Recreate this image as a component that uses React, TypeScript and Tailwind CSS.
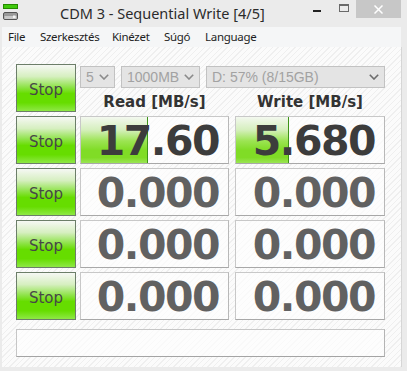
import React from "react";

const hatch =
  "bg-[repeating-linear-gradient(135deg,#fbfbfb_0px,#fbfbfb_3px,#efefef_3px,#efefef_4px)]";

function Chevron({ color }: { color: string }) {
  return (
    <svg width="10" height="6" viewBox="0 0 10 6" className="shrink-0">
      <path d="M0.8 0.8 L5 5 L9.2 0.8" fill="none" stroke={color} strokeWidth="1.6" />
    </svg>
  );
}

function Stop() {
  return (
    <div className="w-[60px] h-[48px] shrink-0 border border-[#6c7e69] bg-[linear-gradient(180deg,#f6f8f4_0%,#d6efc0_25%,#8fe34a_48%,#66dd00_62%,#66dd00_82%,#8ee845_100%)] flex items-center justify-center pt-[4px] font-['DejaVu_Sans',sans-serif] text-[15px] text-[#474747]">
      Stop
    </div>
  );
}

function Value({
  text,
  bar,
  dark,
  w,
}: {
  text: string;
  bar?: number;
  dark?: boolean;
  w: string;
}) {
  return (
    <div
      className={`relative ${w} h-[48px] shrink-0 border border-[#c8c8c8] border-b-[#a8a8a8] border-r-[#b8b8b8] bg-white/60 flex items-center justify-end pr-[9px] pt-[3px]`}
    >
      {bar !== undefined && (
        <div
          className="absolute left-0 top-0 bottom-0 border-r border-[#3d9418] bg-[linear-gradient(180deg,#f3f8ef_0%,#d5efbd_28%,#9ce453_52%,#80dc26_72%,#80dc26_88%,#9ae553_100%)]"
          style={{ width: bar }}
        />
      )}
      <span
        className={`relative font-['DejaVu_Sans',sans-serif] font-bold text-[41px] leading-none tracking-[-1.5px] ${
          dark ? "text-[#3c3c3c]" : "text-[#616161]"
        }`}
      >
        {text}
      </span>
    </div>
  );
}

function Combo({ w, text, chevron }: { w: string; text: string; chevron: string }) {
  return (
    <div
      className={`${w} h-[22px] shrink-0 border border-[#c2c2c2] bg-[#e4e4e4] flex items-center justify-between pl-[5px] pr-[5px] font-['Liberation_Sans',sans-serif] text-[14px] text-[#a2a2a2]`}
    >
      <span>{text}</span>
      <Chevron color={chevron} />
    </div>
  );
}

function Row({ read, write, readBar, writeBar, dark }: { read: string; write: string; readBar?: number; writeBar?: number; dark?: boolean }) {
  return (
    <div className="flex gap-[4px]">
      <Stop />
      <div className="flex gap-[6px]">
        <Value w="w-[149px]" text={read} bar={readBar} dark={dark} />
        <Value w="w-[150px]" text={write} bar={writeBar} dark={dark} />
      </div>
    </div>
  );
}

export default function App() {
  return (
    <div className="w-[407px] h-[371px] bg-[#ebebeb] flex flex-col overflow-hidden">
      {/* title bar */}
      <div className="h-[27px] shrink-0 flex items-start">
        <svg width="16" height="17" viewBox="0 0 16 17" className="ml-[3px] mt-[4px]">
          <rect x="0.5" y="0.5" width="14" height="4" fill="#3fc80c" stroke="#258a00" />
          <rect x="0.5" y="8.5" width="14" height="7" rx="1.5" fill="#9a9a9a" stroke="#555" />
          <rect x="1.5" y="12" width="12" height="3" fill="#c9c9c9" />
          <rect x="10" y="11.5" width="2.5" height="2.5" fill="#f4f4f4" />
        </svg>
        <div className="ml-[41px] mt-[3px] font-['Noto_Sans',sans-serif] text-[14.5px] leading-[20px] text-[#2b2b2b] whitespace-nowrap">
          CDM 3 - Sequential Write [4/5]
        </div>
        <div className="flex-1" />
        <div className="w-[26px] h-[18px] flex items-center justify-center">
          <div className="w-[8px] h-[2px] bg-[#222] mt-[4px]" />
        </div>
        <div className="w-[26px] h-[18px] flex items-start justify-center pt-[4px]">
          <div className="w-[10px] h-[8px] border border-[#6a6a6a] border-t-2 ml-[1px]" />
        </div>
        <div className="w-[45px] h-[18px] bg-[#c7c7c7] flex items-center justify-center">
          <svg width="9" height="9" viewBox="0 0 9 9">
            <path d="M0.5 0.5 L8.5 8.5 M8.5 0.5 L0.5 8.5" stroke="#ffffff" strokeWidth="1.5" />
          </svg>
        </div>
        <div className="w-[6px]" />
      </div>

      {/* client */}
      <div className="flex-1 flex flex-col pl-[2px] pb-[4px]">
        <div className="h-[20px] shrink-0 bg-[#f5f6f7] flex items-center pl-[6px] font-['Noto_Sans',sans-serif] text-[11.5px] tracking-[-0.3px] text-[#1e1e1e] mr-[6px] whitespace-nowrap">
          <span className="w-[32px]">File</span>
          <span className="w-[72px]">Szerkesztés</span>
          <span className="w-[52px]">Kinézet</span>
          <span className="w-[41px]">Súgó</span>
          <span>Language</span>
        </div>
        <div className={`flex-1 ${hatch} border-r border-[#d6d6d6] mr-[5px] pt-[17px] pl-[14px] flex flex-col gap-[4px]`}>
          {/* row 1 */}
          <div className="flex gap-[4px] h-[48px]">
            <Stop />
            <div className="flex flex-col">
              <div className="flex gap-[6px] mt-[2px]">
                <Combo w="w-[35px]" text="5" chevron="#8a8a8a" />
                <Combo w="w-[79px]" text="1000MB" chevron="#8a8a8a" />
                <Combo w="w-[179px]" text="D: 57% (8/15GB)" chevron="#6c6c6c" />
              </div>
              <div className="flex gap-[6px] mt-[5px] font-['DejaVu_Sans',sans-serif] font-bold text-[15px] leading-[18px] text-[#333]">
                <div className="w-[149px] text-center">Read [MB/s]</div>
                <div className="w-[150px] text-center">Write [MB/s]</div>
              </div>
            </div>
          </div>
          <Row read="17.60" write="5.680" readBar={67} writeBar={53} dark />
          <Row read="0.000" write="0.000" />
          <Row read="0.000" write="0.000" />
          <Row read="0.000" write="0.000" />
          <div className="mt-[5px] w-[369px] h-[28px] border border-[#c6c6c6] border-b-[#a4a4a4] border-r-[#b4b4b4] bg-white/60" />
        </div>
      </div>
    </div>
  );
}
